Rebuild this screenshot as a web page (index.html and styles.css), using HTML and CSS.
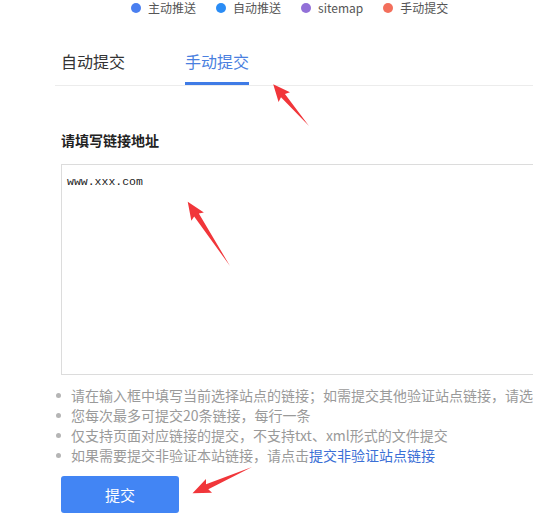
FILE: index.html
```html
<!DOCTYPE html>
<html lang="zh-CN">
<head>
    <meta charset="UTF-8">
    <title>链接提交</title>
    <link rel="stylesheet" href="styles.css">
</head>
<body>

<div class="legend">
    <span class="legend-item"><i class="dot dot-zhudong"></i>主动推送</span>
    <span class="legend-item"><i class="dot dot-zidong"></i>自动推送</span>
    <span class="legend-item"><i class="dot dot-sitemap"></i>sitemap</span>
    <span class="legend-item"><i class="dot dot-shoudong"></i>手动提交</span>
</div>

<div class="tabs">
    <a href="#" class="tab">自动提交</a>
    <a href="#" class="tab active">手动提交</a>
</div>

<section class="submit-form">
    <h3 class="form-label">请填写链接地址</h3>
    <textarea class="url-box">www.xxx.com</textarea>
    <ul class="tips">
        <li>请在输入框中填写当前选择站点的链接；如需提交其他验证站点链接，请选择其他站点</li>
        <li>您每次最多可提交20条链接，每行一条</li>
        <li>仅支持页面对应链接的提交，不支持txt、xml形式的文件提交</li>
        <li>如果需要提交非验证本站链接，请点击<a href="#">提交非验证站点链接</a></li>
    </ul>
    <button class="btn-submit">提交</button>
</section>

<!-- annotation arrows drawn over the screenshot -->
<svg class="arrows" width="533" height="532" viewBox="0 0 533 532">
    <g fill="#f1363a">
        <polygon transform="translate(309 126) rotate(229.4)" points="0,0 40,-2.6 38,-7.5 55,0 38,7.5 40,2.6"/>
        <polygon transform="translate(230 266) rotate(236.7)" points="0,0 61,-2.8 59,-7.5 77,0 59,7.5 61,2.8"/>
        <polygon transform="translate(252 467) rotate(156.2)" points="0,0 49,-2.8 47,-7.5 65,0 47,7.5 49,2.8"/>
    </g>
</svg>

</body>
</html>
```

FILE: styles.css
```css
body { margin: 0; background: #fff; font-family: "Noto Sans CJK SC", "Noto Sans", sans-serif; color: #333; overflow: hidden; position: relative; width: 533px; height: 532px; }

.legend { display: flex; gap: 20px; margin-left: 131px; height: 16px; font-size: 12px; line-height: 16px; color: #555; }
.legend-item { display: flex; align-items: center; }
.dot { display: inline-block; width: 10px; height: 10px; border-radius: 50%; margin-right: 7px; }
.dot-zhudong { background: #4a7ff0; }
.dot-zidong { background: #2a8cf5; }
.dot-sitemap { background: #9270d8; }
.dot-shoudong { background: #f36f5c; }

.tabs { display: flex; gap: 60px; margin: 34px 0 0 55px; padding-left: 6px; border-bottom: 1px solid #ececec; }
.tab { font-size: 16px; line-height: 22px; padding-bottom: 10px; border-bottom: 3px solid transparent; color: #333; text-decoration: none; }
.tab.active { color: #4a7fe0; border-bottom-color: #3f7be6; }

.submit-form { padding-left: 61px; }
.form-label { margin: 45px 0 15px; font-size: 14px; line-height: 18px; font-weight: bold; color: #222; }
.url-box { display: block; box-sizing: border-box; width: 520px; height: 211px; margin: 0; padding: 10px 5px; border: 1px solid #dcdcdc; resize: none; font-family: "Liberation Mono", monospace; font-size: 11.5px; line-height: 14px; color: #222; }

.tips { list-style: none; margin: 10px 0 0 -5px; padding: 0; font-size: 14px; line-height: 20px; color: #9a9a9a; white-space: nowrap; }
.tips li { position: relative; padding-left: 15px; }
.tips li::before { content: ""; position: absolute; left: 0; top: 8px; width: 5px; height: 5px; border-radius: 50%; background: #b5b5b5; }
.tips a { color: #3b6fd6; text-decoration: none; }

.btn-submit { display: block; margin-top: 11px; width: 118px; height: 37px; border: none; border-radius: 3px; background: #4285f4; color: #fff; font-family: inherit; font-size: 15px; }

.arrows { position: absolute; left: 0; top: 0; pointer-events: none; }
```
